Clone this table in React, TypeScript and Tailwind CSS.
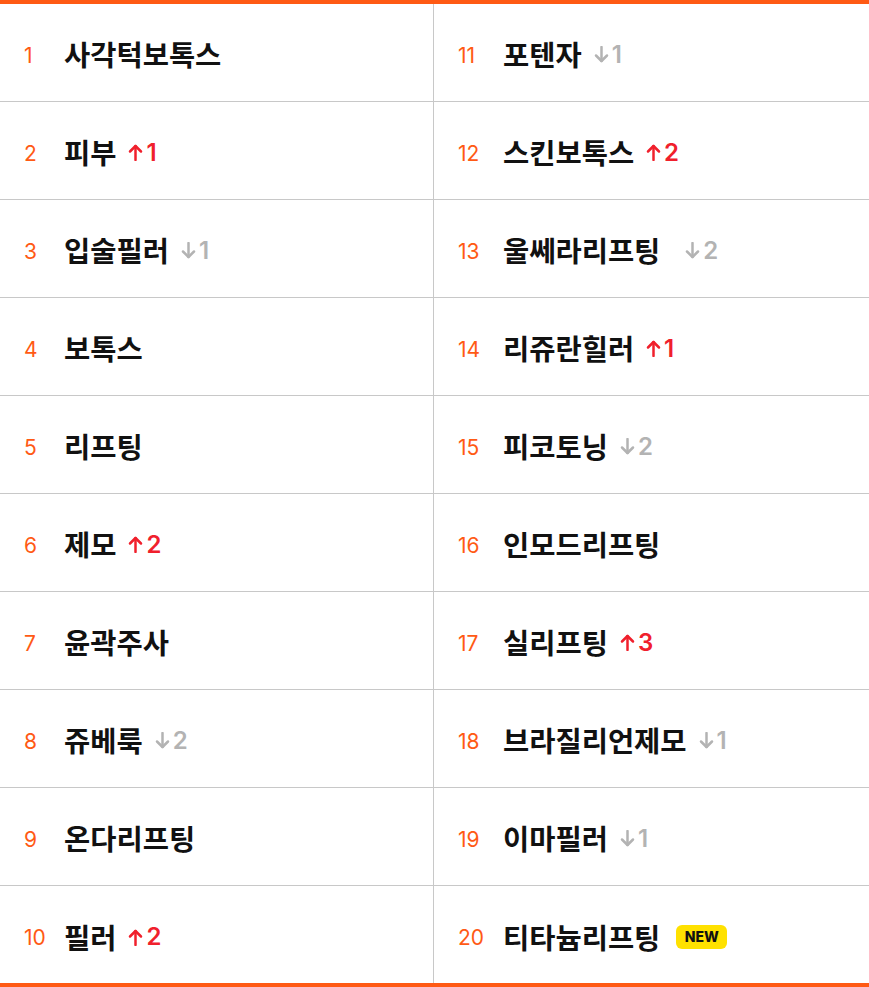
type Change = { dir: "up" | "down"; n: number } | "new" | null;

const items: { name: string; change: Change; gap?: boolean }[] = [
  { name: "사각턱보톡스", change: null },
  { name: "피부", change: { dir: "up", n: 1 } },
  { name: "입술필러", change: { dir: "down", n: 1 } },
  { name: "보톡스", change: null },
  { name: "리프팅", change: null },
  { name: "제모", change: { dir: "up", n: 2 } },
  { name: "윤곽주사", change: null },
  { name: "쥬베룩", change: { dir: "down", n: 2 } },
  { name: "온다리프팅", change: null },
  { name: "필러", change: { dir: "up", n: 2 } },
  { name: "포텐자", change: { dir: "down", n: 1 } },
  { name: "스킨보톡스", change: { dir: "up", n: 2 } },
  { name: "울쎄라리프팅", change: { dir: "down", n: 2 }, gap: true },
  { name: "리쥬란힐러", change: { dir: "up", n: 1 } },
  { name: "피코토닝", change: { dir: "down", n: 2 } },
  { name: "인모드리프팅", change: null },
  { name: "실리프팅", change: { dir: "up", n: 3 } },
  { name: "브라질리언제모", change: { dir: "down", n: 1 } },
  { name: "이마필러", change: { dir: "down", n: 1 } },
  { name: "티타늄리프팅", change: "new" },
];

const Arrow = ({ dir }: { dir: "up" | "down" }) => (
  <svg width="15" height="17" viewBox="0 0 15 17" fill="none" stroke="currentColor" strokeWidth="2.5" strokeLinecap="round" strokeLinejoin="round">
    {dir === "up" ? (
      <>
        <path d="M7.5 16V2" />
        <path d="M2 7.5l5.5-5.5 5.5 5.5" />
      </>
    ) : (
      <>
        <path d="M7.5 1v14" />
        <path d="M2 9.5l5.5 5.5 5.5-5.5" />
      </>
    )}
  </svg>
);

const ChangeTag = ({ change, gap }: { change: Change; gap?: boolean }) => {
  if (!change) return null;
  if (change === "new") {
    return (
      <span className="ml-[16px] flex h-[24px] w-[51px] items-center justify-center rounded-[6px] bg-[#ffe100] font-['Inter',sans-serif] text-[14px] font-extrabold leading-none text-[#111]">
        NEW
      </span>
    );
  }
  const color = change.dir === "up" ? "text-[#f0202c]" : "text-[#b3b3b3]";
  return (
    <span className={`${gap ? "ml-[25px]" : "ml-[12px]"} flex items-center gap-[3px] font-['Inter',sans-serif] text-[24px] font-semibold leading-none ${color}`}>
      <Arrow dir={change.dir} />
      <span>{change.n}</span>
    </span>
  );
};

const Row = ({ rank, name, change, gap, left, last }: { rank: number; name: string; change: Change; gap?: boolean; left: boolean; last: boolean }) => (
  <div
    className={`flex h-[98px] items-center pl-[24px] pt-[4px] ${last ? "" : "border-b border-[#c8c8c8]"} ${left ? "border-r border-r-[#c8c8c8]" : ""}`}
  >
    <span className={`${left ? "w-[40px]" : "w-[45px]"} pt-[2px] font-['Inter',sans-serif] text-[21px] font-normal text-[#ff5a14]`}>{rank}</span>
    <span className="text-[28.5px] font-bold text-[#111]">{name}</span>
    <ChangeTag change={change} gap={gap} />
  </div>
);

export default function App() {
  const leftCol = items.slice(0, 10);
  const rightCol = items.slice(10);
  return (
    <div
      className="w-[869px] h-[987px] overflow-hidden border-t-4 border-b-4 border-[#ff5a14] bg-white"
      style={{ fontFamily: '"Noto Sans CJK KR", "Noto Sans", sans-serif' }}
    >
      <div className="grid grid-cols-[434px_1fr]">
        <div className="flex flex-col">
          {leftCol.map((it, i) => (
            <Row key={i} rank={i + 1} name={it.name} change={it.change} gap={it.gap} left last={i === 9} />
          ))}
        </div>
        <div className="flex flex-col">
          {rightCol.map((it, i) => (
            <Row key={i} rank={i + 11} name={it.name} change={it.change} gap={it.gap} left={false} last={i === 9} />
          ))}
        </div>
      </div>
    </div>
  );
}
